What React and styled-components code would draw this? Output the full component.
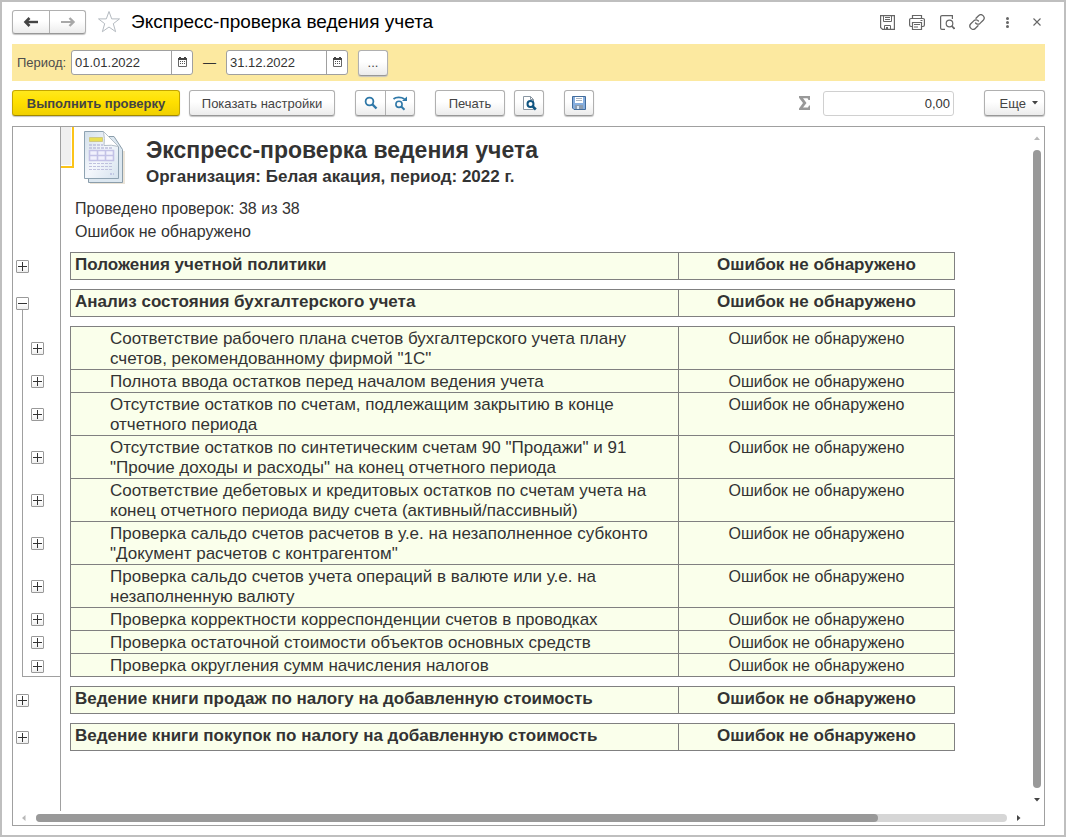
import React from 'react';
import styled, { createGlobalStyle, css } from 'styled-components';

const GlobalStyle = createGlobalStyle`
  * {
    box-sizing: border-box;
  }

  body {
    margin: 0;
    background-color: #fff;
    color: #333;
    font-family: 'Liberation Sans', Arial, sans-serif;
    font-size: 13px;
  }

  button,
  input {
    font: inherit;
    color: inherit;
  }

  h1,
  h2,
  p {
    margin: 0;
  }
`;

const Window = styled.div`
  display: flex;
  flex-direction: column;
  min-height: 100vh;
  border: 2px solid #bfbfbf;
`;

const TitleBar = styled.header`
  display: flex;
  align-items: center;
  height: 42px;
  padding: 0 12px 2px 10px;
`;

const raised = css`
  border: 1px solid #b0b0b0;
  border-bottom-color: #989898;
  border-radius: 3px;
  background: linear-gradient(#fff 45%, #ececec);
  box-shadow: 0 1px 1px #c4c4c4;
`;

const ButtonGroup = styled.div`
  ${raised}
  display: flex;
  height: ${({ $height }) => $height || 26}px;

  & > button + button {
    border-left: 1px solid #b0b0b0;
  }
`;

const Segment = styled.button`
  display: flex;
  align-items: center;
  justify-content: center;
  width: ${({ $width }) => $width || 29}px;
  padding: 0;
  border: none;
  background: transparent;
`;

const StarButton = styled.button`
  display: flex;
  margin: 0 10px 0 11px;
  padding: 0;
  border: none;
  background: transparent;
`;

const Title = styled.h1`
  flex: 1;
  font-size: 19px;
  font-weight: normal;
  line-height: 24px;
  color: #000;
`;

const TitleTool = styled.button`
  display: flex;
  align-items: center;
  justify-content: center;
  width: 30px;
  height: 24px;
  padding: 0;
  border: none;
  background: transparent;
`;

const PeriodBar = styled.div`
  display: flex;
  align-items: center;
  height: 37px;
  margin: 0 19px 0 10px;
  padding: 0 5px;
  background-color: #fce9a0;
`;

const PeriodLabel = styled.label`
  width: 54px;
  color: #4d4d4d;
`;

const DateBox = styled.div`
  display: flex;
  width: 122px;
  height: 25px;
  border: 1px solid #a0a0a0;
  border-radius: 3px;
  background-color: #fff;

  & > button {
    width: 21px;
    padding-bottom: 2px;
    border-left: 1px solid #a0a0a0;
  }
`;

const DateInput = styled.input`
  flex: 1;
  min-width: 0;
  padding: 0 3px;
  border: none;
  background: transparent;
`;

const Dash = styled.span`
  width: 33px;
  text-align: center;
`;

const Button = styled.button`
  ${raised}
  display: flex;
  align-items: center;
  justify-content: center;
  gap: 6px;
  width: ${({ $width }) => $width}px;
  height: 26px;
  padding: 0;
  color: #444;
`;

const PrimaryButton = styled(Button)`
  border-color: #c4a600;
  border-bottom-color: #a08800;
  background: linear-gradient(#ffe81c, #ffe000 45%, #f0d000);
  font-weight: bold;
`;

const PeriodMore = styled(Button)`
  margin-left: 10px;
`;

const MoreButton = styled(Button)`
  justify-content: flex-end;
  padding-right: 6px;
`;

const Toolbar = styled.div`
  display: flex;
  align-items: center;
  gap: 20px;
  margin: 9px 19px 10px 10px;
`;

const ToolGroup = styled.div`
  display: flex;
  gap: 9px;
`;

const SumBox = styled.label`
  display: flex;
  align-items: center;
  gap: 12px;
  margin: 0 10px 0 auto;
`;

const SumInput = styled.input`
  width: 131px;
  height: 25px;
  padding: 0 3px;
  border: 1px solid #d0d0d0;
  border-radius: 3px;
  text-align: right;
`;

const ReportFrame = styled.main`
  display: flex;
  flex-direction: column;
  flex: 1;
  margin: 0 19px 9px 10px;
  border: 1px solid #a0a0a0;
`;

const ReportBody = styled.div`
  display: flex;
  flex: 1;
`;

const Sheet = styled.div`
  display: flex;
  flex-direction: column;
  flex: 1;
  min-width: 0;
  overflow: hidden;
  font-size: 17px;
  line-height: 20px;
`;

const SheetHead = styled.div`
  display: flex;
`;

const Gutter = styled.div`
  flex: none;
  width: 48px;
  border-right: 1px solid #a0a0a0;
`;

const GutterRest = styled(Gutter)`
  flex: 1;
`;

const HeadContent = styled.div`
  padding-bottom: 9px;
`;

const ReportTitle = styled.div`
  display: flex;
  height: 70px;
`;

const ActiveCell = styled.div`
  width: 13px;
  height: 41px;
  border: solid #fcc419;
  border-width: 0 2px 2px 0;
  background-color: #f0f0f0;
  box-shadow: inset -1px -1px #fff;
`;

const DocPicture = styled.svg`
  margin: 4px 20px 0 10px;
`;

const TitleText = styled.div`
  padding-top: 8px;
`;

const ReportName = styled.h2`
  font-size: 23px;
  line-height: 30px;
`;

const ReportOrg = styled.p`
  font-weight: bold;
  line-height: 23px;
`;

const Summary = styled.p`
  padding-left: 14px;
  font-size: 16px;
  line-height: 23px;
`;

const CheckTable = styled.table`
  width: 942px;
  table-layout: fixed;
  border-spacing: 0;

  td {
    padding: 0;
  }
`;

const line = 'linear-gradient(#a0a0a0, #a0a0a0) no-repeat';

const branches = {
  start: `${line} 9px 100% / 1px 50%`,
  through: `${line} 9px 0 / 1px 100%`,
  end: `${line} 9px 0 / 1px 100%, ${line} 100% 100% / 38px 1px`,
};

const TreeCell = styled.td`
  && {
    padding-top: ${({ $nested }) => ($nested ? 2 : 0)}px;
    padding-left: ${({ $nested }) => ($nested ? 18 : 3)}px;
    border-right: 1px solid #a0a0a0;
    background: ${({ $branch }) => branches[$branch] || 'none'};
    vertical-align: middle;
  }
`;

const Toggle = styled.button`
  display: flex;
  width: 13px;
  height: 13px;
  padding: 0;
  border: 1px solid #999;
  border-radius: 1px;
  background: linear-gradient(#fff 50%, #eee);
`;

const CheckRow = styled.tr`
  height: ${({ $group }) => ($group ? 28 : 23)}px;
  font-weight: ${({ $group }) => ($group ? 'bold' : 'normal')};
`;

const SpacerRow = styled.tr`
  height: 9px;
`;

const edge = '1px solid #808080';

const CheckCell = styled.td`
  && {
    padding: ${({ $group }) => ($group ? '2px 4px 0' : '2px 20px 0 39px')};
    border-top: ${edge};
    border-left: ${edge};
    border-bottom: ${({ $last }) => ($last ? edge : 'none')};
    background-color: #faffeb;
    vertical-align: top;
  }
`;

const StatusCell = styled(CheckCell)`
  && {
    padding-left: 0;
    padding-right: 0;
    border-right: ${edge};
    font-size: ${({ $group }) => ($group ? 17 : 16)}px;
    text-align: center;
  }
`;

const VerticalScroll = styled.div`
  display: flex;
  flex-direction: column;
  align-items: center;
  justify-content: space-between;
  width: 14px;
  padding: 8px 0;
`;

const VerticalThumb = styled.div`
  flex: 1;
  width: 8px;
  margin: 9px 0;
  border-radius: 4px;
  background-color: #999;
`;

const HorizontalScroll = styled.div`
  display: flex;
  align-items: center;
  height: 14px;
  padding: 0 22px 0 8px;
`;

const HorizontalTrack = styled.div`
  flex: 1;
  height: 8px;
  margin: 0 9px;
  border-radius: 4px;
  background-color: #d6d6d6;
`;

const HorizontalThumb = styled.div`
  width: 86.7%;
  height: 8px;
  border-radius: 4px;
  background-color: #999;
`;

const ArrowIcon = ({ color }) => (
  <svg width='16' height='12' viewBox='0 0 16 12'>
    <path d='M4 6h11' stroke={color} strokeWidth='2.400' />
    <path d='M6.500 2L2.500 6l4 4' fill='none' stroke={color} strokeWidth='2.600' />
  </svg>
);

const ForwardIcon = () => (
  <svg width='16' height='12' viewBox='0 0 16 12'>
    <path d='M1 6h12' stroke='#a8a8a8' strokeWidth='2' />
    <path d='M9.500 2l4 4-4 4' fill='none' stroke='#a8a8a8' strokeWidth='2.400' />
  </svg>
);

const StarIcon = () => (
  <svg width='24' height='24' viewBox='0 0 24 24'>
    <path d='M12 1.500l2.700 7.400h7.800l-6.200 4.800 2.300 8-6.600-4.700-6.600 4.700 2.300-8-6.200-4.800h7.800z' fill='none' stroke='#b4bac0' />
  </svg>
);

const CalendarIcon = () => (
  <svg width='9' height='10' viewBox='0 0 9 10'>
    <path d='M.5 1.500h8v8h-8z' fill='#fff' stroke='#666' />
    <path d='M0 1h9v2H0zM1 0h2v1H1zM6 0h2v1H6z' fill='#444' />
    <path d='M2 4h1v1H2zM4 4h1v1H4zM6 4h1v1H6zM2 6h1v1H2zM4 6h1v1H4zM6 6h1v1H6z' fill='#555' />
  </svg>
);

const SearchIcon = () => (
  <svg width='14' height='14' viewBox='0 0 14 14'>
    <circle cx='5.500' cy='5.500' r='3.900' fill='none' stroke='#2f78a8' strokeWidth='1.800' />
    <path d='M8.500 8.500l4 4' stroke='#2f78a8' strokeWidth='2.400' />
  </svg>
);

const SearchNextIcon = () => (
  <svg width='16' height='15' viewBox='0 0 16 15'>
    <path d='M1.500 3C4 1 9 .800 12.500 3' fill='none' stroke='#2f78a8' strokeWidth='1.800' />
    <path d='M15 .500v4.500h-5z' fill='#2f78a8' />
    <circle cx='7' cy='8.300' r='3.100' fill='none' stroke='#2f78a8' strokeWidth='1.600' />
    <path d='M9.200 10.500l3.300 3.300' stroke='#2f78a8' strokeWidth='2' />
  </svg>
);

const PreviewIcon = () => (
  <svg width='16' height='16' viewBox='0 0 16 16'>
    <path d='M2.500 1.500h7l3 3v10h-10z' fill='#fff' stroke='#8a97a3' />
    <path d='M9.500 1.500v3h3' fill='none' stroke='#8a97a3' />
    <circle cx='9.500' cy='9' r='3' fill='#fff' stroke='#0f5480' strokeWidth='2' />
    <path d='M11.500 11.200l3.300 3.300' stroke='#0f5480' strokeWidth='2.600' />
  </svg>
);

const DiskIcon = () => (
  <svg width='14' height='14' viewBox='0 0 14 14'>
    <path d='M.5.500h13v13H2L.5 12z' fill='#86aede' stroke='#426c9c' />
    <path d='M3 1h8v6H3z' fill='#fff' />
    <path d='M4 2.500h6M4 4.500h6' stroke='#a9b4c0' />
    <path d='M3 9h8v4H3z' fill='#8c9db0' />
    <path d='M5 10h2v3H5z' fill='#dbe6f2' />
  </svg>
);

const SaveIcon = () => (
  <svg width='15' height='15' viewBox='0 0 15 15' fill='none' stroke='#666'>
    <path d='M.6.600h13.800v13.800H2.600l-2-2z' strokeWidth='1.200' />
    <path d='M3.500.500v6h8v-6M5 2.500h5M5 4.500h5M4.500 14v-3.500h6V14' />
    <path d='M6 12h2v2H6z' fill='#666' stroke='none' />
  </svg>
);

const PrinterIcon = () => (
  <svg width='16' height='15' viewBox='0 0 16 15' fill='none' stroke='#666' strokeWidth='1.200'>
    <path d='M3.500 3.500v-3h9v3M3.500 11.500H2a1.400 1.400 0 0 1-1.400-1.400V5A1.400 1.400 0 0 1 2 3.500h12A1.400 1.400 0 0 1 15.400 5v5.100a1.400 1.400 0 0 1-1.400 1.400h-1.500' />
    <path d='M3.500 7.500h9v7h-9zM5 9.500h6M5 12h4M11.500 5.500h2' />
  </svg>
);

const PageSearchIcon = () => (
  <svg width='15' height='15' viewBox='0 0 15 15' fill='none' stroke='#666' strokeWidth='1.200'>
    <path d='M5 14.400H2A1.400 1.400 0 0 1 .6 13V2A1.400 1.400 0 0 1 2 .600h10.400V4' />
    <circle cx='9.500' cy='8.500' r='3.300' />
    <path d='M11.800 11l2.700 2.800' strokeWidth='1.800' />
  </svg>
);

const LinkIcon = () => (
  <svg width='16' height='16' viewBox='0 0 16 16' fill='none' stroke='#666' strokeWidth='1.300' strokeLinecap='round'>
    <path d='M7 4.300l2.500-2.500a3 3 0 0 1 4.700 4.400L11 9.400a3 3 0 0 1-4.400-.400' />
    <path d='M9 11.700l-2.500 2.500a3 3 0 0 1-4.700-4.400L5 6.600a3 3 0 0 1 4.400.400' />
  </svg>
);

const DotsIcon = () => (
  <svg width='3' height='11' viewBox='0 0 3 11' fill='#666'>
    <circle cx='1.500' cy='1.500' r='1.500' />
    <circle cx='1.500' cy='5.500' r='1.500' />
    <circle cx='1.500' cy='9.500' r='1.500' />
  </svg>
);

const CloseIcon = () => (
  <svg width='8' height='8' viewBox='0 0 8 8'>
    <path d='M.5.500l7 7M7.500.500l-7 7' stroke='#666' strokeWidth='1.100' />
  </svg>
);

const SigmaIcon = () => (
  <svg width='13' height='14' viewBox='0 0 13 14'>
    <path d='M1 0h11v4h-1.500L9.500 2.200H5L8.500 7 5 11.500h5l1-2h1V14H1v-1.500L5 7 1 1.700z' fill='#999' />
  </svg>
);

const Triangle = ({ dir, color }) => {
  const paths = {
    up: 'M3 1.500l3 3.500H0z',
    down: 'M0 1h6L3 4.500z',
    left: 'M4.500 0v6L1 3z',
    right: 'M1 0v6l3.500-3z',
  };
  return (
    <svg width='6' height='6' viewBox='0 0 6 6'>
      <path d={paths[dir]} fill={color} />
    </svg>
  );
};

const ReportPicture = () => (
  <DocPicture width='42' height='55' viewBox='0 0 42 55'>
    <defs>
      <linearGradient id='paper' x1='0' y1='0' x2='1' y2='1'>
        <stop offset='0' stopColor='#d3e0ea' />
        <stop offset='.5' stopColor='#f4f7fc' />
        <stop offset='1' stopColor='#d6e3ee' />
      </linearGradient>
    </defs>
    <path d='M6 20h35v33H6z' fill='#ebe4d8' />
    <path d='M4.500 5.500H30l8.500 13v33h-34z' fill='#dce7f0' stroke='#8b9daa' />
    <path d='M.5.500h19l15 15v32H.5z' fill='url(#paper)' stroke='#8fa3b2' />
    <path d='M19.500.500l15 15q-7-2-14.500-1 1-7-.5-14z' fill='#fff' stroke='#b3bec7' />
    <path d='M5.500 6.500h13v4h-13z' fill='#e9df54' stroke='#cfc985' />
    <path d='M5 14h14M5 17h24' stroke='#bcbedc' strokeWidth='1.500' strokeDasharray='3 1' />
    <path d='M5.500 19.500h24v10h-24zM5.500 24.500h24M13.500 19.500v10M21.500 19.500v10' fill='#f1f1fc' stroke='#c3c2e6' strokeWidth='1.600' />
    <path d='M5 32.500h24M5 35.500h24M5 38.500h24' stroke='#bfc1de' strokeDasharray='3 1' />
    <path d='M26 43h4' stroke='#a4a7d4' strokeDasharray='2 1' />
  </DocPicture>
);

const TreeToggle = ({ open }) => (
  <Toggle type='button' aria-expanded={!!open} aria-label={open ? 'Свернуть' : 'Развернуть'}>
    <svg width='11' height='11' viewBox='0 0 11 11'>
      <path d={open ? 'M1 5.500h9' : 'M1 5.500h9M5.500 1v9'} stroke='#333' />
    </svg>
  </Toggle>
);

const DateField = ({ id, value, label }) => (
  <DateBox>
    <DateInput id={id} defaultValue={value} aria-label={label} />
    <Segment type='button' aria-label='Выбрать дату'><CalendarIcon /></Segment>
  </DateBox>
);

const OK = 'Ошибок не обнаружено';

const groups = [
  { name: 'Положения учетной политики' },
  {
    name: 'Анализ состояния бухгалтерского учета',
    checks: [
      'Соответствие рабочего плана счетов бухгалтерского учета плану счетов, рекомендованному фирмой "1С"',
      'Полнота ввода остатков перед началом ведения учета',
      'Отсутствие остатков по счетам, подлежащим закрытию в конце отчетного периода',
      'Отсутствие остатков по синтетическим счетам 90 "Продажи" и 91 "Прочие доходы и расходы" на конец отчетного периода',
      'Соответствие дебетовых и кредитовых остатков по счетам учета на конец отчетного периода виду счета (активный/пассивный)',
      'Проверка сальдо счетов расчетов в у.е. на незаполненное субконто "Документ расчетов с контрагентом"',
      'Проверка сальдо счетов учета операций в валюте или у.е. на незаполненную валюту',
      'Проверка корректности корреспонденции счетов в проводках',
      'Проверка остаточной стоимости объектов основных средств',
      'Проверка округления сумм начисления налогов',
    ],
  },
  { name: 'Ведение книги продаж по налогу на добавленную стоимость' },
  { name: 'Ведение книги покупок по налогу на добавленную стоимость' },
];

const Spacer = ({ branch }) => (
  <SpacerRow>
    <TreeCell $branch={branch} />
    <td colSpan={3} />
  </SpacerRow>
);

const Group = ({ name, checks }) => (
  <tbody>
    <CheckRow $group>
      <TreeCell $branch={checks && 'start'}><TreeToggle open={checks} /></TreeCell>
      <td />
      <CheckCell $group $last>{name}</CheckCell>
      <StatusCell $group $last>{OK}</StatusCell>
    </CheckRow>
    <Spacer branch={checks && 'through'} />
    {checks && checks.map((check, i) => {
      const last = i === checks.length - 1;
      return (
        <CheckRow key={check}>
          <TreeCell $nested $branch={last ? 'end' : 'through'}><TreeToggle /></TreeCell>
          <td />
          <CheckCell $last={last}>{check}</CheckCell>
          <StatusCell $last={last}>{OK}</StatusCell>
        </CheckRow>
      );
    })}
    {checks && <Spacer />}
  </tbody>
);

const App = () => (
  <>
    <GlobalStyle />
    <Window>
      <TitleBar>
        <ButtonGroup $height={24}>
          <Segment type='button' $width={36} aria-label='Назад'><ArrowIcon color='#444' /></Segment>
          <Segment type='button' $width={36} aria-label='Вперед'><ForwardIcon /></Segment>
        </ButtonGroup>
        <StarButton type='button' aria-label='В избранное'><StarIcon /></StarButton>
        <Title>Экспресс-проверка ведения учета</Title>
        <TitleTool type='button' aria-label='Сохранить'><SaveIcon /></TitleTool>
        <TitleTool type='button' aria-label='Печать'><PrinterIcon /></TitleTool>
        <TitleTool type='button' aria-label='Просмотр'><PageSearchIcon /></TitleTool>
        <TitleTool type='button' aria-label='Ссылка'><LinkIcon /></TitleTool>
        <TitleTool type='button' aria-label='Меню'><DotsIcon /></TitleTool>
        <TitleTool type='button' aria-label='Закрыть'><CloseIcon /></TitleTool>
      </TitleBar>

      <PeriodBar>
        <PeriodLabel htmlFor='from'>Период:</PeriodLabel>
        <DateField id='from' value='01.01.2022' />
        <Dash>—</Dash>
        <DateField id='to' value='31.12.2022' label='Конец периода' />
        <PeriodMore type='button' $width={30}>...</PeriodMore>
      </PeriodBar>

      <Toolbar>
        <ToolGroup>
          <PrimaryButton type='button' $width={168}>Выполнить проверку</PrimaryButton>
          <Button type='button' $width={146}>Показать настройки</Button>
        </ToolGroup>
        <ButtonGroup>
          <Segment type='button' aria-label='Найти'><SearchIcon /></Segment>
          <Segment type='button' aria-label='Найти далее'><SearchNextIcon /></Segment>
        </ButtonGroup>
        <ToolGroup>
          <Button type='button' $width={70}>Печать</Button>
          <Button type='button' $width={30} aria-label='Предварительный просмотр'><PreviewIcon /></Button>
        </ToolGroup>
        <Button type='button' $width={30} aria-label='Сохранить отчет'><DiskIcon /></Button>
        <SumBox>
          <SigmaIcon />
          <SumInput aria-label='Сумма' defaultValue='0,00' />
        </SumBox>
        <MoreButton type='button' $width={61}>
          Еще <Triangle dir='down' color='#444' />
        </MoreButton>
      </Toolbar>

      <ReportFrame>
        <ReportBody>
          <Sheet>
            <SheetHead>
              <Gutter />
              <HeadContent>
                <ReportTitle>
                  <ActiveCell />
                  <ReportPicture />
                  <TitleText>
                    <ReportName>Экспресс-проверка ведения учета</ReportName>
                    <ReportOrg>Организация: Белая акация, период: 2022 г.</ReportOrg>
                  </TitleText>
                </ReportTitle>
                <Summary>Проведено проверок: 38 из 38</Summary>
                <Summary>Ошибок не обнаружено</Summary>
              </HeadContent>
            </SheetHead>
            <CheckTable>
              <colgroup>
                <col width='48' />
                <col width='9' />
                <col width='608' />
                <col width='277' />
              </colgroup>
              {groups.map((group) => <Group key={group.name} {...group} />)}
            </CheckTable>
            <GutterRest />
          </Sheet>
          <VerticalScroll>
            <Triangle dir='up' color='#b8b8b8' />
            <VerticalThumb />
            <Triangle dir='down' color='#444' />
          </VerticalScroll>
        </ReportBody>
        <HorizontalScroll>
          <Triangle dir='left' color='#b8b8b8' />
          <HorizontalTrack><HorizontalThumb /></HorizontalTrack>
          <Triangle dir='right' color='#444' />
        </HorizontalScroll>
      </ReportFrame>
    </Window>
  </>
);

export default App;
